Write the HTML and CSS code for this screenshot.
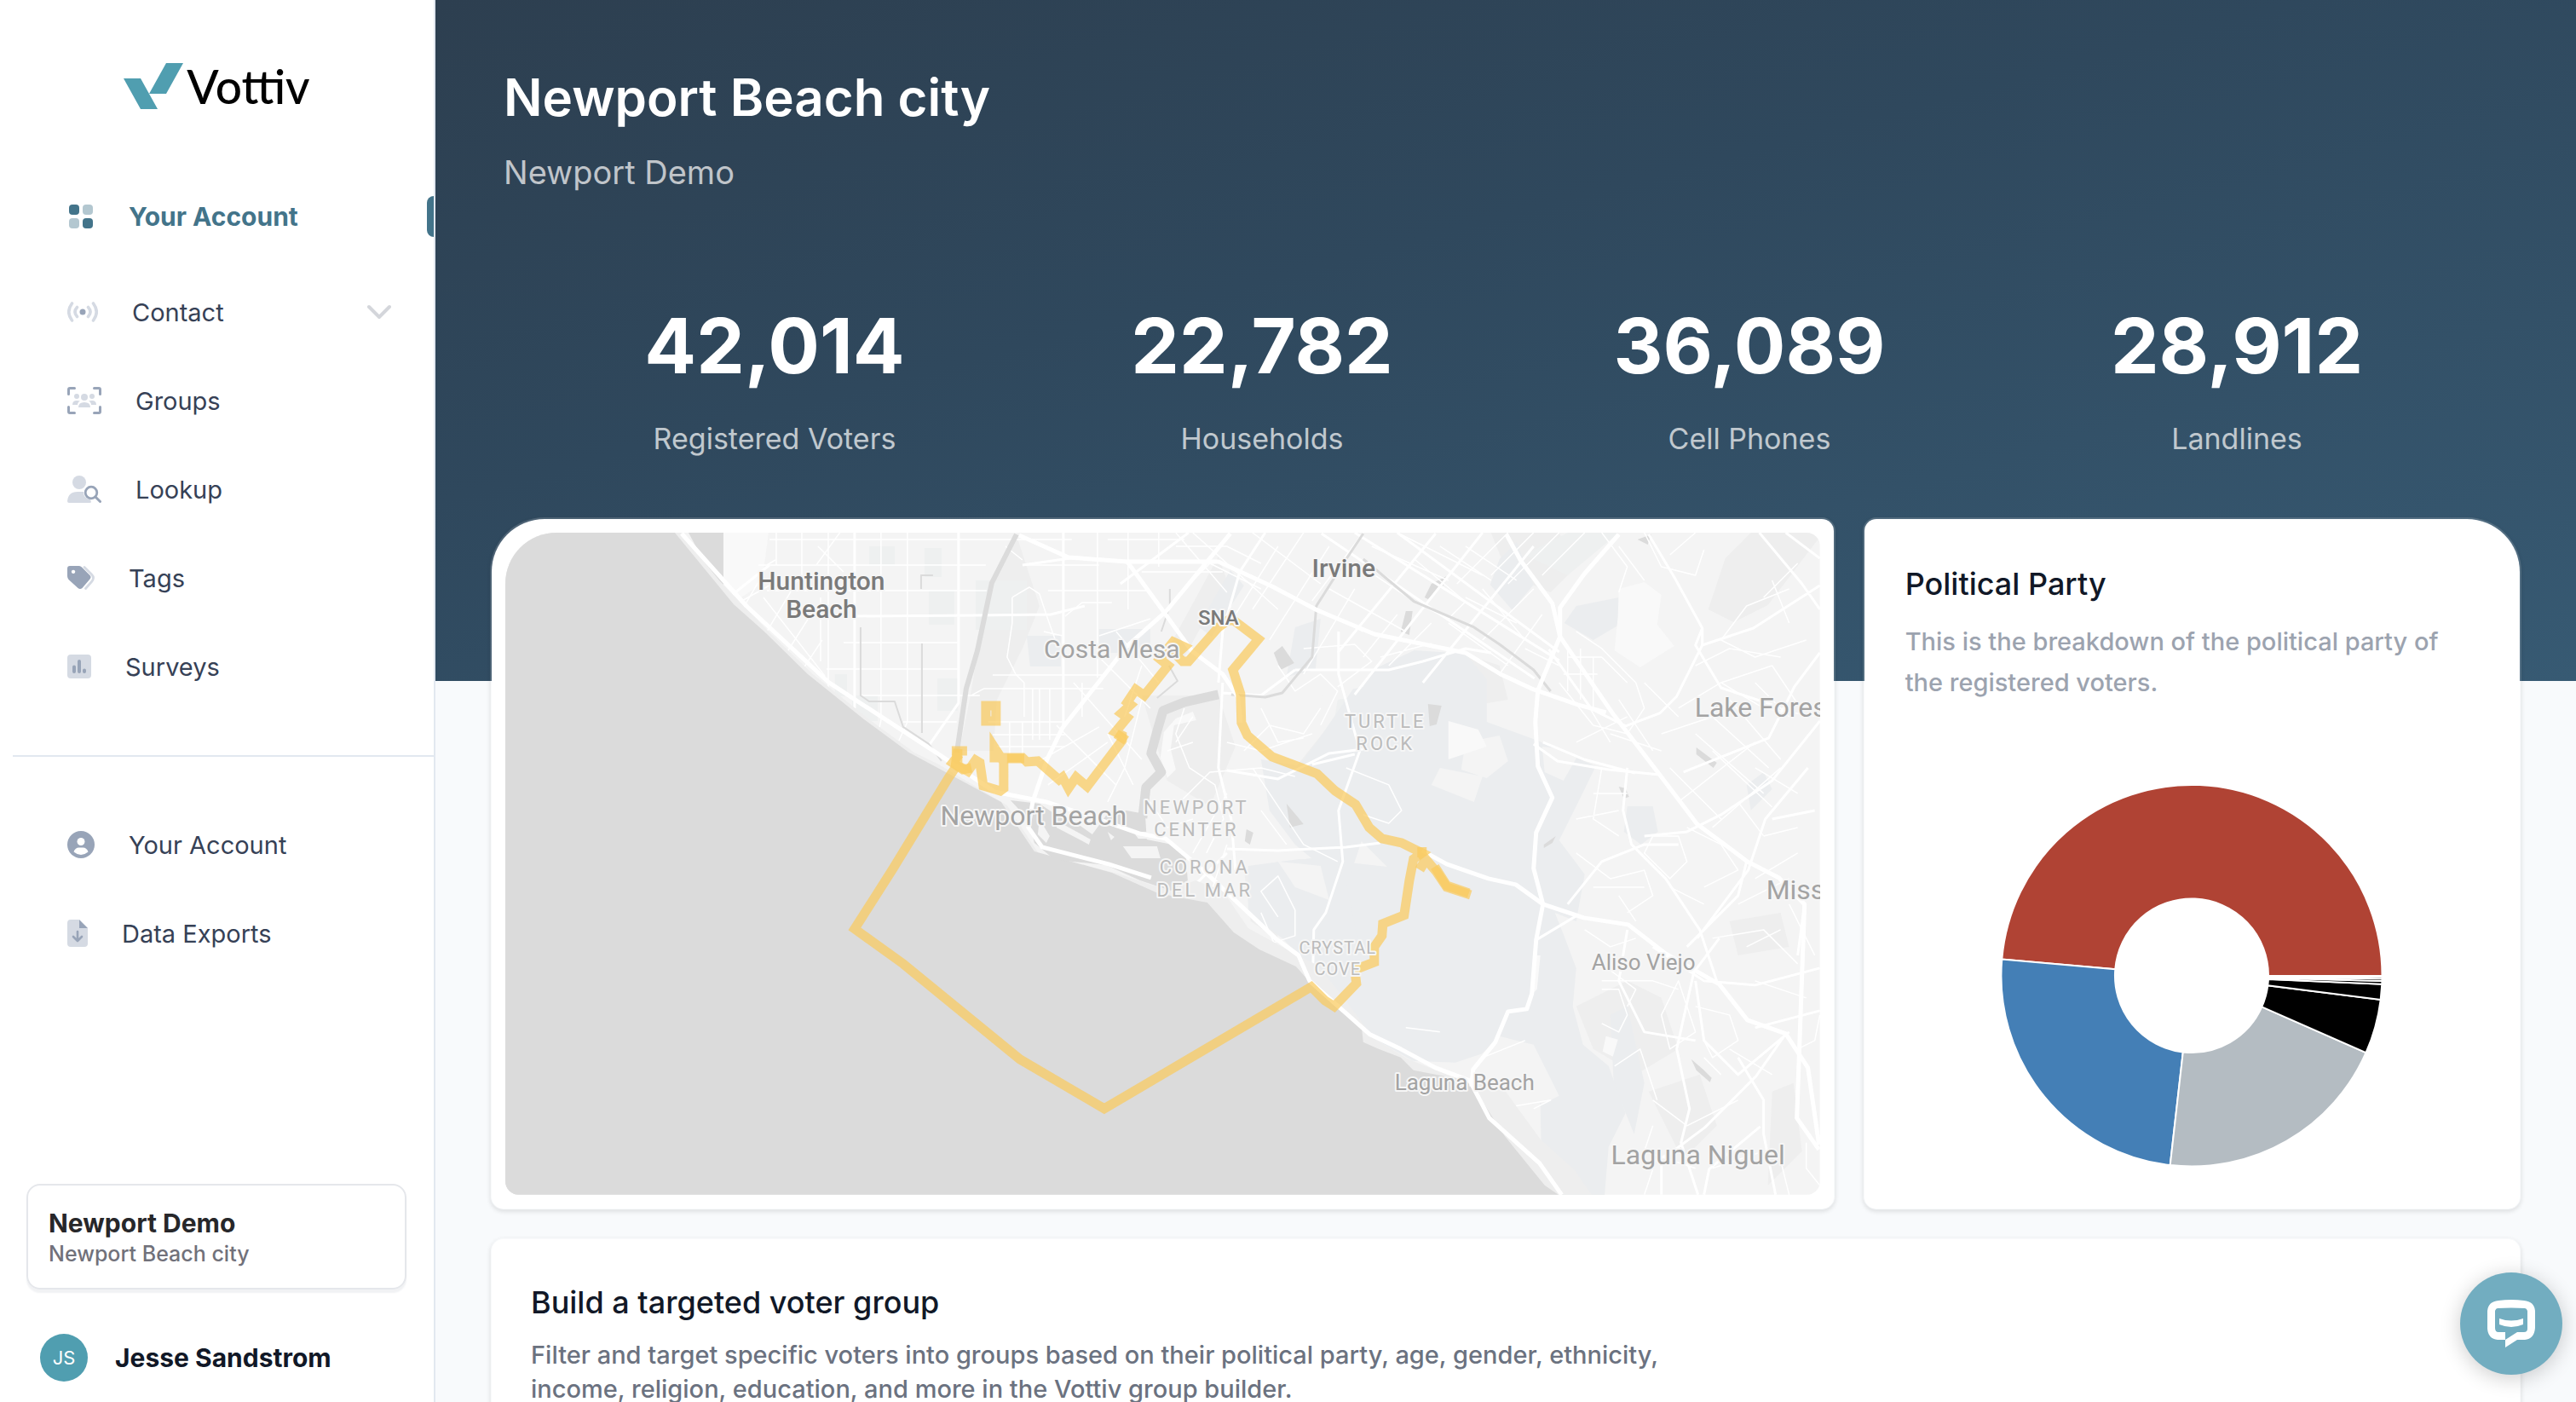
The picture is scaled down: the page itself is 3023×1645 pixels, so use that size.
FILE: index.html
```html
<!doctype html>
<html lang="en">
<head>
<meta charset="utf-8">
<title>Vottiv</title>
<link rel="stylesheet" href="styles.css">
</head>
<body>
	<aside class="sidebar">
		<a class="logo" href="#">
			<svg width="70" height="54" viewBox="0 0 70 54"><path fill="#509eb0" d="M50 0h20L50 36H30zM0 18h20l20 36H20z"/></svg>
			<span>Vottiv</span>
		</a>
		<nav>
			<a class="item active" href="#">
				<svg width="32" height="32" viewBox="0 0 32 32"><g fill="#43748a"><rect x="2" y="2" width="12" height="12" rx="4"/><rect x="18" y="18" width="12" height="12" rx="4"/></g><g fill="#b3c7d0"><rect x="18" y="2" width="12" height="12" rx="4"/><rect x="2" y="18" width="12" height="12" rx="4"/></g></svg>
				Your Account
			</a>
			<button class="item" type="button">
				<svg width="36" height="24" viewBox="0 0 36 24"><circle cx="18" cy="12" r="3.5" fill="#98a4b8"/><path fill="none" stroke="#d5dae3" stroke-width="3.6" stroke-linecap="round" d="M11.500 6.500q-5 5.500 0 11M24.500 6.500q5 5.500 0 11M5.500 2q-7.500 10 0 20M30.500 2q7.500 10 0 20"/></svg>
				Contact
				<svg class="chevron" width="28" height="18" viewBox="0 0 28 18"><path fill="none" stroke="#d4d6db" stroke-width="4" stroke-linecap="round" stroke-linejoin="round" d="M2 3l12 12L26 3"/></svg>
			</button>
			<a class="item" href="#">
				<svg width="40" height="32" viewBox="0 0 40 32"><path fill="none" stroke="#98a4b8" stroke-width="3" stroke-linecap="round" d="M1.500 8.500V3q0-1.500 1.500-1.500h5.500M31.500 1.500H37q1.500 0 1.500 1.500v5.500M1.500 23.500V29q0 1.500 1.500 1.500h5.500M31.500 30.500H37q1.500 0 1.500-1.500v-5.500"/><g fill="#d5dae3"><circle cx="20" cy="12" r="4"/><circle cx="11" cy="11" r="3"/><circle cx="29" cy="11" r="3"/><path d="M13 24q0-6 7-6t7 6zM6 21q0-5 5-5 3 0 4 .5Q12 18 12 21zM34 21q0-5-5-5-3 0-4 .5Q28 18 28 21z"/></g></svg>
				Groups
			</a>
			<a class="item" href="#">
				<svg width="40" height="32" viewBox="0 0 40 32"><g fill="#d5dae3"><circle cx="14" cy="8" r="8"/><path d="M0 30q1-11 12-11h7q0 8 8 9l1 3q0 1-2 1H2q-2 0-2-2z"/></g><circle cx="28" cy="20" r="6.800" fill="none" stroke="#98a4b8" stroke-width="2.800"/><path stroke="#98a4b8" stroke-width="3" stroke-linecap="round" d="M33 25l5.500 5.500"/></svg>
				Lookup
			</a>
			<a class="item" href="#">
				<svg width="32" height="28" viewBox="0 0 32 28"><path fill="#98a4b8" fill-rule="evenodd" d="M3 0h11q1.500 0 3 1.500l9.500 9.500q2 2 0 4.500L17.500 26q-2.500 2-5 0L1.500 16Q0 14 0 12V3q0-3 3-3zM7 4.700a2.200 2.200 0 1 0 .1 0z"/><path fill="none" stroke="#d5dae3" stroke-width="2.800" stroke-linecap="round" d="M20 1.500l8.500 8.500q4 4 0 8.500l-7 8"/></svg>
				Tags
			</a>
			<a class="item" href="#">
				<svg width="28" height="28" viewBox="0 0 28 28"><rect width="28" height="28" rx="4" fill="#d5dae3"/><path stroke="#98a4b8" stroke-width="4" stroke-linecap="round" d="M8 14.500v5.500M14 8v12M20 18.500v1.500"/></svg>
				Surveys
			</a>
			<hr>
			<a class="item" href="#">
				<svg width="32" height="32" viewBox="0 0 32 32"><circle cx="16" cy="16" r="16" fill="#98a4b8"/><circle cx="16" cy="12.500" r="4.500" fill="#fff"/><path fill="#fff" d="M7.500 24.500q2-5 6-5h5q4 0 6 5-8.500 7-17 0z"/></svg>
				Your Account
			</a>
			<a class="item" href="#">
				<svg width="24" height="32" viewBox="0 0 24 32"><path fill="#d5dae3" d="M4 0h10v10h10v18q0 4-4 4H4q-4 0-4-4V4q0-4 4-4z"/><path fill="#98a4b8" d="M14 0l10 10H14z"/><path fill="none" stroke="#98a4b8" stroke-width="2.600" stroke-linecap="round" stroke-linejoin="round" d="M12 14v10.500M7 20l5 5 5-5"/></svg>
				Data Exports
			</a>
		</nav>
		<button class="account" type="button">
			<strong>Newport Demo</strong>
			<span>Newport Beach city</span>
		</button>
		<a class="user" href="#">
			<span class="avatar">JS</span>
			Jesse Sandstrom
		</a>
	</aside>

	<main>
		<header class="hero">
			<h1>Newport Beach city</h1>
			<p class="sub">Newport Demo</p>
			<div class="stats">
				<div><b>42,014</b><span>Registered Voters</span></div>
				<div><b>22,782</b><span>Households</span></div>
				<div><b>36,089</b><span>Cell Phones</span></div>
				<div><b>28,912</b><span>Landlines</span></div>
			</div>
		</header>

		<div class="cards">
			<section class="card map">
				<svg viewBox="593 624 1543 777" role="img" aria-label="Map of Newport Beach">
					<rect class="land" x="593" y="624" width="1543" height="777"/>
					<!-- fields and parks -->
					<g fill="#eeeeee">
						<path d="M1190 630l-30 60-22 130-12 60h40l4-60 30-60 20-50-26-80zM2055 624l-30 30-20 60 30 15 40-20 61-80v-25zM1750 624h80l20 40-30 30-50-20zM1440 680l-50 90-20-8 60-110zM1700 760l60 20 10 40-60 10zM1560 850l60 40-40 40-60-30zM1680 840l60 20 20 60-40 20-50-30zM1500 1010l-40 10 8 60 30 20 25-60zM1340 815l90 0 20 60-30 70-50-30zM1850 1180l60-30 40 20 20 60-50 30-50-30zM1935 1280l60-20 20 60-40 40zM2080 1280l25-10 10 80-40 40zM2030 1080l60-10 10 40-60 10z"/>
					</g>
					<g fill="#eef0f0">
						<path d="M1085 642h20v34h-20zM1145 680h60v58h-60zM1090 692h30v40h-30zM1100 795h24v38h-24zM1020 640h30v22h-30zM1570 820l60-10 30 30-10 60-40 30-50-50zM1790 650l50-26h60l-60 50zM980 790h14v26h-14zM1000 815h30v30h-30zM1530 1120l50-40 12 30-20 60-40-20z"/>
					</g>
					<g fill="#ebedef">
						<path d="M1290 737h60v28h-60zM1444 668l16 18-38 60-16-12zM1205 745l40 0v36h-36zM1520 735l30-10-6 60-34 8zM1760 655l20-20 20 50-25 30-26-30zM1850 710l50-10 4 30-34 20-34-20zM1910 945h30l6 30-20 15-20-15zM2050 920l20-15 10 20-25 25zM1890 1190l20-10 20 90-12 60-24-60z"/>
						<path d="M1600 790l60-28 60 4 25 30v50l60 22 68 30-23 47-20 40 30 40-10 55-25-10 10 25 15 40-4 45 12 45 30 25 20 55-20 40-5 61h-73l-2-110-20-75-50 15-30 10-50-2-40-23-40-35-40-50-30-40-40-20v-60l70-10 90 10-50-50-60-60 30-40z"/>
						<path d="M1465 1015l60-8 50 3 20 100-40 40-50-50-40-30zM1480 890l60 10 60 80-20 60-60-50-30-40z"/>
					</g>
					<g fill="#f4f4f4"><path d="M1720 870l40-8 10 30-25 20-30-10zM1690 900l50 10-10 30-50-20zM1810 875l45 5-20 35-22-10zM1500 1010l50 5 10 40-40-15zM1560 765l60 0-20 40-50 10zM1760 1215l40 10 30 60-20 10-40-40-70 20z"/></g>
					<g fill="#f9f9f9"><path d="M1900 690l30-8 20 15-5 35 20 25-40 25-30-20 4-40zM848 624h54l-8 60-30 20-16-10zM1700 845l35 10 10 20-45 15zM1380 842l20-8 4 10-26 6-4 28 6 24-10 10-8-24 4-30zM1885 1215l14 4-6 20-12-6zM1800 1120l8 0-4 40-6 6z"/></g>
					<!-- small lakes -->
					<g class="water">
						<path d="M1505 757l14 20-16 8-8-20zM1672 700l8-16 20-10-6 12-18 16zM1650 716l8 0-4 28-10-4zM1676 825l16 2-6 22-8 2zM1510 942l20 24-16 4zM1463 972l8 4-4 14-6-4zM1922 632l16-6-4 12zM1985 1242l14 12 10 10-2 5-16-14zM1812 990l14-10-4 8-10 6zM1900 922l8 2 4 10-6 2zM1991 876l24 18-4 6-20-16zM2010 822l10 6-8 6zM808 624h41v60l-4 10-8-16z"/>
					</g>
					<!-- street grid -->
					<g class="road minor">
						<path d="M911 624v38M941 624v62M972 624v85M1003 624v210M1034 624v220l-6 28M1065 624v222l-10 22M1248 722v130M1288 624v170M1248 624v98M1324 624v90M1360 624v40M903 632h355M890 662h267M900 692h258M860 710l50-28M990 753h135M970 784h155M1010 815h140M1060 846h63M1200 662h90M1230 692h120M1300 632h90M1340 670h95M1165 791h130M1140 815l15-8h140M1160 846h90M1165 861h85M1170 875h80M1212 807v60M1220 807v60M1232 807v60M1270 800v40M1185 846v45M1200 846v50"/>
						<path d="M900 662l10-6M873 711l20-34M880 728l60 74M896 700l72 92M900 740l36-60M920 770l38-60M935 795l30-45M963 700v75M972 710v110M958 662l45-62M960 640l30 30"/>
						<path d="M1188 700l20-12 12 8 10 30 10 28M1188 700v30l-6 40 10 20 10 10v40M1290 745l60-20M1250 722l20-16h35M1225 740l22 5M1180 640l20 16M1380 640l60 0 40 20M1390 690l30-30 60 30"/>
						<path d="M1260 800l80 90M1290 770l60 60M1240 850l60 60M1310 740l50 60M1220 892l70-40M1230 920l70-50M1260 870l50 50M1300 860l30 60M1340 780l-20 60M1340 820l-20 80-20 40"/>
						<path d="M1390 830l-10 30 16 40 30 20 10 40-20 40M1370 880l30-10M1400 840l-20 30M1440 870l40 10 60-20M1460 880l30-30 40 10 20-30M1500 780l20 30 30-20 20 20-20 40M1480 830l20 40 30-5M1530 760l60-5 20 20-40 30"/>
						<path d="M1380 945l40-40 60-5 40 10M1400 1000l40-70M1350 940l20 30 30-10M1440 990l-20 60M1470 900l60 90 40 20M1480 950l30 40M1580 900l50 20 15 30-15 15-30-10M1500 1075l-20-30 20-18 20 40 0 30-25 8-15-35"/>
						<path d="M1380 624l60 70M1400 624l100 90M1470 624l80 60M1500 640l-50 80M1530 624l-60 90M1560 640l-70 110M1590 690l-60 100M1600 624l-60 80M1560 690l90 50M1600 665l60 40 40 20 20-20-60-50M1540 710l60 30M1610 640l90 40M1640 720l-40 50M1680 730l-50 50M1620 770l60-16M1690 640l60 40M1640 624l100 50M1720 700l60 30M1740 690l50 60M1700 730l70 50M1740 750l60-60M1760 790l50-70M1790 760l40 20M1770 624l-60 60M1720 640l60 40M1800 624l-50 50M1830 624l-60 60M1860 624l-50 50M1880 624l30 40-10 30"/>
						<path d="M1850 740l30 20 40 40 10 30-20 30-40-10M1840 770h40l30 30M1835 790h40M1840 760v50M1855 760v60M1870 770v60M1830 800l40 50M1860 820l30 50M1900 820l40 60M1930 800l40 40M1890 860l60 20M1850 870l60-30M1900 640l30 40M1930 624l20 40 40 10 10-30M1960 650l30-26M2100 690l-50 20-30 40 40 20 60-20M2080 680l20 50M2110 660l-40 40M1990 780l40-20 60 10M2020 800l60-20M1970 830l50-30 50 30 66 10M1950 860l60-20 66 60M1990 860l80 70M2060 800l40 40M2030 820l60 70M2080 780l40 60M1960 900l60 60M2010 880l70 66M2060 870l-90 70M2090 900l-80 70M2040 940l30 40M2060 900l50 30"/>
						<path d="M1870 930h40M1880 900l-10 60 30 20M1850 960l50-10M1850 1000l40 30 40-10 10 30-30 20M1870 1040l60 0M1940 980l30 0 10 30-20 20-30-30zM1980 970l40 20 20 30-40 20M1960 1040l40 20M1900 1050l20 30M1860 1090l30 20 30-10M1880 1130l40 30-10 20M1880 1160l20 0 10 30-10 20-20-10M1970 1150l20 60-30 20-10-40zM1990 1180l40 10 10 30-30 20-10-20M1880 1150h60l30 10M1895 1250l30-20 20 60M1940 1290l40 30 60-30M2000 1240l20 20M2030 1230l50 30M1940 1320l-10 30 60 20M2010 1370l60-20M2060 1150l60 20M2100 1060l30 60M2050 1110l40-20M2010 1100l60-10 40 40M2040 1060l60-30M2060 1030l50-30M2070 980l40-10"/>
						<path d="M1660 1290l50-20M1760 1300l60-10-20 10M1740 1240l50-20M1650 1205l40 5M2110 1230l20-10 6-30M2120 1340v30l16 20M2100 1401l-10-40M1930 1401l10-30"/>
					</g>
					<g class="road mid">
						<path d="M1003 624v98M1125 624v200l-35 50M1248 624v230M1003 722l140-1 90-1 40-10M1003 722v108M903 662l-50 40 30 60M1323 658l-60-5-63 9M1395 624l-80 60"/>
						<path d="M1430 800l5-60 20-70 30-46M1435 800l-5 100 15 60 5 60M1685 625l-115 140M1800 640l-130 160M1551 625l250 170M1590 624l240 150M1640 624l190 140M1740 624l-150 190M1520 785l110 0 40-10 50-15 30 5M1520 785l-40 30-45-3M1571 740l0 50 25 90-25 70 5 60-20 60-14 20-2 90-10 10-40-5M1590 884l-50 12M1440 903l60 10 60-30 40-5M1440 995l60 2 80-4 40-5M1440 1000l-40 40"/>
						<path d="M1935 626l30 50 33 60 0 20-30 60-20 20-40 15-40-20-50-70M1998 736l-8 20 30 50 60 20M1998 756l60-20 78-50M2136 765l-30 40-30 60-50 20-50 20M1948 908l-60-6-60-10-28-20M1811 870l48 20 60 16M1910 900l-5 50 10 40 40 40 40 60 20 60M1930 980l50-5 40-20 60-40 56-70M1840 1060l40-50 50-20 40 0M1992 1100l60-80 20-60 50-60M2018 1100l-30 40-20 90 15 70-10 40 20 61M2050 1010l-10 40-60 60M1990 1150l10 70 40 40 60-50M2096 1212l-35 50-60 60-40 30-20 10M1950 1360v41M2040 1240l30 50 0 40 14 71M2000 1401l6-30 60-50M1910 1090l-10 60 30 60 60 10M1940 1110l60 40 60 5 76-20M2060 1205l76-20M2080 960l50-10M1803 1102l50-30M2065 624l50 60 21 30M2118 1060l-8 60M2096 624l40 30"/>
					</g>
					<g class="river">
						<path stroke-width="6" d="M1193 626l-29 57-17 80-13 44-11 75"/>
						<path stroke-width="3" d="M1600 625l-20 30-35 55-5 60-35 42-20 5-40-3M1600 655l60 50 70 30 30 20 40 30 20 25"/>
						<path stroke-width="2" d="M1010 735v80l10 7h30l10 30 30 20 15 20M1082 754v105M1081 690v-16h14M1373 690v20l-10 30M1372 780l10 18-24 20"/>
						<path stroke-width="11" d="M1430 814l-40 9-25 10-7 24-7 26 12 22-18 18-4 36"/>
					</g>
					<!-- ocean -->
					<path class="beach" d="M593 624h206l45 56 60 62 50 48 66 53 53 39 29 14 80 48 38 58 92 22 60 20 31-12 32 12 30 44 40 22 42 22 30 38 36 48 40 24 50 20 60 12 45 62 40 36 20 29H593z"/>
					<path class="water" d="M593 624h199l46 56 23 28 36 32 51 50 66 53 53 39 28 15 80 43 39 58 91 25 54 24 31 6 27 5 31 35 30 20 43 20 21 24 28 26 28 20 2 19 18 8 26 10 15 15 26 5 35 7 9 8 37 57 34 42 13 16 16 11H593z"/>
					<path class="water" d="M1186 938l34 4 18 12 30 14 14 10 16-22 24-6 22 4 2 30 30 6 16 16 2 26-20 12-36-12-40-18-60-6-24-20-6-26z"/>
					<g class="land"><path d="M1240 962l40 22-2 6-38-20zM1220 960l12 20-4 8-10-10zM1318 992l40 0 4 14-34 0zM1300 975l8 6-4 4zM1330 975l30 0 0 8-24 0z"/></g>
					<!-- highways -->
					<g class="road major">
						<path d="M1196 627l58 26 69 5h107l63 29 53 28 67 28 107 22 41 25 39 18 52 18 33 9"/>
						<path d="M1768 626l17 31 37 50 9 39 61 89 56 73 44 58 59 44 37 19 30 31-6 168-3 83 26 37"/>
						<path d="M1900 626l-41 47-28 39v34l-26 63-3 37 3 52 17 37-19 41-3 42 11 42-8 42-5 63-6 18-22 3-15 36-26 32-2 20"/>
						<path d="M1323 658l40 55 36 50 36 27 18 27 3 30M1669 997l29 16 49 17 32 7 32 23 48 16 52 8 44 34 63 36 33 42 45 16 26 40 13 90"/>
						<path d="M800 625l76 85 97 90 127 83 67 45 61 12 60 20 49 17 31 6 44 37 85 80 27 20 13 30 71 63 36 17 41 22 40 15 23 44 59 53 26 37"/>
						<path d="M1444 625l-76 92-45 40-76 96-18 37-17 50-5 30 16 23 78 20 50 16"/>
					</g>
					<!-- city boundary -->
					<g class="boundary">
						<path d="M1124 878L1121 900 1113 912 1047 1020 1003 1089 1060 1130 1197 1242 1296 1300 1539 1157 1555 1173 1566 1180 1592 1153 1590 1137 1613 1128V1110L1622 1097 1623 1083 1648 1073 1654 1033 1659 1007 1669 1000 1645 988 1622 983 1607 970 1591 943 1567 927 1546 907 1493 887 1464 862 1457 847 1456 813 1447 785 1477 749 1448 727H1441L1430 735 1395 775H1388L1380 767 1390 758 1377 752 1361 772 1371 780 1343 815 1333 808 1323 823 1327 826 1316 836 1323 841 1309 858 1317 862V868L1276 922 1263 911 1254 924 1247 911 1243 914 1218 892 1205 893 1200 888H1167V876L1178 893V924L1174 927 1154 921 1150 894 1145 891 1136 904 1124 897z"/>
						<path d="M1117 880h18M1126 884l-8 10 12 8 10-2M1182 889h20M1669 993v12M1669 1002l17 20 12 18 28 9M1664 1012l10 6M1310 860l12 8"/>
						<path d="M1684 1016l14 22 26 9"/>
						<path d="M1157 827h12v18h-12z"/>
					</g>
					<g class="city dark">
						<text x="964" y="691">Huntington</text><text x="964" y="724">Beach</text>
						<text x="1577" y="676">Irvine</text>
						<text class="small" x="1430" y="732">SNA</text>
					</g>
					<g class="city">
						<text class="costa" x="1305" y="771">Costa Mesa</text><text x="1213" y="967">Newport Beach</text>
						<text x="1993" y="1365">Laguna Niguel</text>
						<text class="start" x="1989" y="840">Lake Forest</text><text class="start" x="2073" y="1054">Mission Viejo</text>
						<text class="town" x="1929" y="1137">Aliso Viejo</text><text class="town" x="1719" y="1278">Laguna Beach</text>
					</g>
					<g class="area">
						<text x="1626" y="853">TURTLE</text><text x="1626" y="879">ROCK</text>
						<text x="1404" y="954">NEWPORT</text><text x="1404" y="980">CENTER</text>
						<text x="1414" y="1024">CORONA</text><text x="1414" y="1051">DEL MAR</text>
						<text class="tight" x="1570" y="1118">CRYSTAL</text><text class="tight" x="1570" y="1143">COVE</text>
					</g>
				</svg>
			</section>

			<section class="card party">
				<h2>Political Party</h2>
				<p>This is the breakdown of the political party of the registered voters.</p>
				<svg class="donut" viewBox="-225 -225 450 450" role="img" aria-label="Political party breakdown">
					<path fill="#b04334" d="M223.500 0A223.500 223.500 0 0 0-222.700-19.500L-89.700-7.800A90 90 0 0 1 90 0z"/>
					<path fill="#447fb6" d="M-222.700-19.500A223.500 223.500 0 0 0-25.300 222.100L-10.200 89.400A90 90 0 0 1-89.700-7.800z"/>
					<path fill="#b4bcc2" d="M-25.300 222.100A223.500 223.500 0 0 0 204.500 90.200L82.300 36.300A90 90 0 0 1-10.200 89.400z"/>
					<path d="M204.500 90.200A223.500 223.500 0 0 0 221.700 28L89.300 11.300A90 90 0 0 1 82.300 36.300z"/>
					<path d="M221.700 28L223.300 9.700 90 3.900 89.300 11.300z"/>
					<path d="M223.300 9.700L223.400 6 90 2.400V3.900z"/>
					<path d="M223.400 6L223.500 3.300 90 1.400V2.400z"/>
					<path d="M223.500 3.300V1L90 .5V1.400z"/>
				</svg>
			</section>

			<section class="card build">
				<h2>Build a targeted voter group</h2>
				<p>Filter and target specific voters into groups based on their political party, age, gender, ethnicity, income, religion, education, and more in the Vottiv group builder.</p>
			</section>
		</div>
	</main>

	<button class="chat" type="button" aria-label="Open chat">
		<svg width="56" height="56" viewBox="0 0 56 56"><path fill="#fff" fill-rule="evenodd" d="M13 1q15-2 30 0 12 1 13 12v20q-1 13-12 14h-9l-14 9v-9h-9Q1 46 0 34V13Q1 2 13 1zM12 10q-2 0-3 3v20q0 5 4 5h8v9l14-9h8q4 0 4-4V13q-1-3-3-3-16-1-32 0z"/><path fill="#fff" d="M14 22q14 5 28 0v7q-14 6-28 0z"/></svg>
	</button>
</body>
</html>
```
FILE: styles.css
```css
*{
	margin:0;
	padding:0;
	box-sizing: border-box;
}
body{
	display: flex;
	height: 100vh;
	overflow: hidden;
	background: #f8fafc;
	font-family: Inter, "Open Sans", sans-serif;
	font-size: 29px;
	color: #364156;
}
a{
	color: inherit;
	text-decoration: none;
}
button{
	border: none;
	background: none;
	font: inherit;
	color: inherit;
	cursor: pointer;
}
svg{
	flex: none;
}

/* sidebar */
.sidebar{
	display: flex;
	flex-direction: column;
	flex: none;
	width: 511px;
	background: #fff;
	border-right: 2px solid #e2e8f0;
}
.logo{
	display: flex;
	justify-content: center;
	align-items: center;
	gap: 4px;
	height: 202px;
	color: #000;
	font: 500 55px/60px Lato, sans-serif;
}
.item{
	display: flex;
	align-items: center;
	gap: 40px;
	width: 100%;
	height: 104px;
	padding-left: 79px;
	text-align: left;
}
.item.active{
	position: relative;
	margin-bottom: 8px;
	color: #43748a;
	font-size: 30px;
	font-weight: 700;
}
.item.active::after{
	content: "";
	position: absolute;
	right: 0;
	width: 8px;
	height: 48px;
	border-radius: 8px 0 0 8px;
	background: #43748a;
}
.chevron{
	margin-left: auto;
	margin-right: 50px;
}
.sidebar hr{
	margin: 52px 0 51px 15px;
	border: none;
	border-top: 2px solid #e2e8f0;
}
.account{
	display: flex;
	flex-direction: column;
	margin: auto 32px 52px 31px;
	padding: 24px;
	border: 2px solid #e5e7eb;
	border-radius: 16px;
	box-shadow: 0 4px 2px #f1f2f4;
	text-align: left;
}
.account strong{
	font-size: 30px;
	line-height: 40px;
	color: #27272a;
}
.account span{
	font-size: 25px;
	font-weight: 500;
	line-height: 32px;
	color: #71717a;
}
.user{
	display: flex;
	align-items: center;
	gap: 32px;
	padding: 0 47px 24px;
	color: #111827;
	font-size: 30px;
	font-weight: 700;
}
.avatar{
	width: 56px;
	height: 56px;
	border-radius: 50%;
	background: #509eb0;
	color: #fff;
	font-size: 22px;
	font-weight: 400;
	line-height: 56px;
	text-align: center;
}

/* page */
main{
	flex: 1;
	min-width: 0;
}
.hero{
	padding: 78px 64px 260px;
	background: linear-gradient(165deg, #2d3f50, #2f485d 40%, #375a73);
	color: #fff;
}
.hero h1{
	padding-left: 16px;
	font-size: 60px;
	font-weight: 600;
	line-height: 72px;
}
.sub{
	margin-top: 28px;
	padding-left: 16px;
	font-size: 38px;
	line-height: 48px;
	color: #c0c5ca;
}
.stats{
	display: grid;
	grid-template-columns: repeat(4, 1fr);
	margin-top: 132px;
	padding: 0 48px;
	text-align: center;
}
.stats b, .stats span{
	display: block;
}
.stats b{
	font-size: 90px;
	line-height: 96px;
}
.stats span{
	margin-top: 37px;
	font-size: 34px;
	line-height: 48px;
	color: #c0c8ce;
}

.cards{
	display: grid;
	grid-template-columns: repeat(3, 1fr);
	gap: 32px;
	margin-top: -192px;
	padding: 0 64px;
}
.card{
	background: #fff;
	background-clip: padding-box;
	border: 2px solid rgba(255,255,255,.15);
	border-radius: 16px;
	box-shadow: 0 2px 5px rgba(0,0,0,.1);
}
.card h2{
	color: #111827;
	font-size: 36px;
	font-weight: 500;
	line-height: 48px;
}
.map{
	grid-column: span 2;
	padding: 16px;
	border-top-left-radius: 64px;
}
.map svg{
	display: block;
	width: 100%;
	border-radius: 60px 16px 16px 16px;
}
.party{
	display: flex;
	flex-direction: column;
	padding: 52px 48px 48px;
	border-top-right-radius: 64px;
}
.party p{
	margin-top: 20px;
	padding-right: 24px;
	font-weight: 500;
	line-height: 48px;
	color: #9ca3af;
}
.donut{
	width: 450px;
	margin: auto auto 0;
}
.donut path{
	stroke: #fff;
	stroke-width: 2;
}
.build{
	grid-column: span 3;
	padding: 50px 46px;
}
.build p{
	max-width: 1400px;
	margin-top: 18px;
	font-weight: 500;
	line-height: 40px;
	color: #6b7280;
}

/* map */
.land{
	fill: #f4f4f4;
}
.water{
	fill: #dbdbdb;
}
.beach{
	fill: #eeeeee;
}
.road, .river, .boundary{
	fill: none;
	stroke: #fff;
	stroke-linejoin: round;
}
.minor{
	stroke-width: 1.5;
}
.mid{
	stroke-width: 3;
}
.major{
	stroke-width: 5;
}
.river{
	stroke: #dbdbdb;
}
.boundary{
	stroke: #f9ca5e;
	stroke-opacity: .72;
	stroke-width: 11;
	stroke-linejoin: miter;
}
.city, .area{
	fill: #a3a3a3;
	stroke: #f6f6f6;
	stroke-width: 4;
	stroke-linejoin: round;
	paint-order: stroke;
	text-anchor: middle;
	font-family: Roboto, sans-serif;
	font-size: 32px;
}
.city.dark{
	fill: #7a7a7a;
	font-size: 30px;
	font-weight: 500;
}
.city .small{
	font-size: 24px;
}
.city .costa{
	font-size: 30px;
}
.city .start{
	text-anchor: start;
}
.city .town{
	font-size: 26px;
}
.area{
	fill: #bbb;
	font-size: 22px;
	letter-spacing: 3px;
}
.area .tight{
	font-size: 20px;
	letter-spacing: 1px;
}

.chat{
	position: fixed;
	right: 16px;
	bottom: 32px;
	display: flex;
	align-items: center;
	justify-content: center;
	width: 120px;
	height: 120px;
	border-radius: 50%;
	background: #72adc0;
	box-shadow: 0 4px 24px rgba(0,0,0,.2);
}
```
